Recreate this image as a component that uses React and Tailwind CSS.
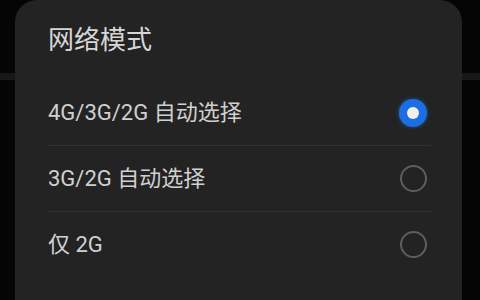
import React from "react";

const options = [
  { label: "4G/3G/2G 自动选择", checked: true },
  { label: "3G/2G 自动选择", checked: false },
  { label: "仅 2G", checked: false },
];

function Radio({ checked }) {
  if (checked) {
    return (
      <div className="mr-[4px] flex h-[28px] w-[28px] items-center justify-center rounded-full bg-[#1b6fe2] shadow-[0_0_4px_rgba(27,111,226,0.6)]">
        <div className="h-[12px] w-[12px] rounded-full bg-[#f2eee8]"></div>
      </div>
    );
  }
  return (
    <div className="mr-[4px] h-[27px] w-[27px] rounded-full border-2 border-[#5e5e5e]"></div>
  );
}

export default function App() {
  return (
    <div
      className="relative h-[300px] w-[480px] overflow-hidden bg-[#050505]"
      style={{ fontFamily: "Roboto, 'Noto Sans CJK SC', sans-serif" }}
    >
      {/* page behind the dialog */}
      <div className="flex flex-col">
        <div className="h-[73px]"></div>
        <div className="h-[7px] bg-[#181818]"></div>
      </div>

      {/* dialog */}
      <div className="absolute left-[15px] top-0 h-[330px] w-[447px] rounded-[22px] bg-[#232323] pl-[33px] pr-[31px] pt-[24px]">
        <h1 className="h-[32px] text-[26px] leading-[32px] text-[#d6d6d6]">
          网络模式
        </h1>

        <div className="mt-[24px] flex flex-col">
          {options.map((o, i) => (
            <div
              key={o.label}
              className={
                i < options.length - 1
                  ? "flex h-[66px] items-center justify-between border-b border-[#313131]"
                  : "flex h-[65px] items-center justify-between"
              }
            >
              <span className="text-[22px] text-[#d0d0d0]">{o.label}</span>
              <Radio checked={o.checked} />
            </div>
          ))}
        </div>
      </div>
    </div>
  );
}
